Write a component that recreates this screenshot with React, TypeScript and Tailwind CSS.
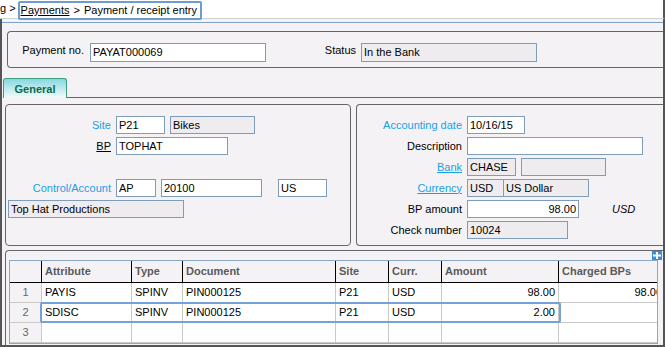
import React from "react";

const Inp = ({ c, gray, right, children }: { c: string; gray?: boolean; right?: boolean; children?: React.ReactNode }) => (
  <div
    className={`h-[18px] shrink-0 border border-[#7f9db9] flex items-center px-[2px] text-black leading-none whitespace-nowrap overflow-hidden ${
      gray ? "bg-[#efecf0]" : "bg-white"
    } ${right ? "justify-end" : "justify-start"} ${c}`}
  >
    {children}
  </div>
);

const Label = ({ children, cls }: { children: React.ReactNode; cls?: string }) => (
  <div className={`w-[105px] shrink-0 text-right pr-0 leading-none whitespace-nowrap ${cls ?? "text-black"}`}>{children}</div>
);

const Row = ({ children }: { children?: React.ReactNode }) => (
  <div className="h-[18px] flex items-center">{children}</div>
);

const headCell = "h-full flex items-center border-r border-black pl-[3px] font-bold text-[#5a5a5a] shrink-0";
const bodyCell = "h-full flex items-center border-r border-[#c9c9c9] px-[3px] shrink-0 bg-white";

const cols = ["w-[32px]", "w-[90px]", "w-[51px]", "w-[153px]", "w-[53px]", "w-[53px]", "w-[117px]", "w-[107px]"];

const rows = [
  ["1", "PAYIS", "SPINV", "PIN000125", "P21", "USD", "98.00", "98.00"],
  ["2", "SDISC", "SPINV", "PIN000125", "P21", "USD", "2.00", ""],
  ["3", "", "", "", "", "", "", ""],
];

export default function App() {
  return (
    <div className="w-[665px] h-[347px] bg-[#f5f2f6] flex flex-col overflow-hidden text-[11px] font-['Liberation_Sans',Arial,sans-serif]">
      {/* breadcrumb bar */}
      <div className="h-[19px] shrink-0 bg-white border-b border-[#d0d0d0] border-r-2 border-r-[#555] flex items-start relative z-10 text-black">
        <span className="underline mt-[3px] leading-none">g</span>
        <span className="ml-[3px] mt-[3px] leading-none">&gt;</span>
        <div className="ml-[2px] mt-[1px] w-[184px] h-[19px] border-2 border-[#6f9bd0] rounded-[2px] flex items-center pl-[1px] leading-none bg-white">
          <span className="underline">Payments</span>
          <span className="ml-[4px]">&gt;</span>
          <span className="ml-[4px]">Payment / receipt entry</span>
        </div>
      </div>

      {/* main */}
      <div className="flex-1 flex flex-col border-l-2 border-r-2 border-b-2 border-[#555] min-h-0">
        <div className="pt-[3px]">
          <div className="h-px bg-[#7ea2c8]" />
        </div>

        {/* header box */}
        <div className="mt-[8px] ml-[5px] h-[37px] border border-r-0 border-[#666] rounded-l-[4px] flex items-start pt-[11px]">
          <div className="w-[76px] text-right leading-none self-center -mt-[11px] pt-[1px]">Payment no.</div>
          <div className="ml-[6px]">
            <Inp c="w-[176px] h-[19px]">PAYAT000069</Inp>
          </div>
          <div className="w-[90px] text-right leading-none self-center -mt-[11px] pt-[1px]">Status</div>
          <div className="ml-[5px]">
            <Inp c="w-[176px] h-[19px]" gray>
              In the Bank
            </Inp>
          </div>
        </div>

        {/* tab row */}
        <div className="mt-[10px] h-[20px] flex items-end">
          <div className="ml-[1px] w-[64px] h-[20px] border border-b-0 border-[#3ba07f] rounded-t-[3px] bg-linear-to-b from-[#86d7e1] to-[#f3fbfb] flex items-center justify-center pt-[1px] font-bold text-[#0f6a4c] leading-none">
            General
          </div>
          <div className="flex-1 h-full border-b border-[#666]" />
        </div>

        {/* panels */}
        <div className="mt-[6px] ml-[3px] h-[142px] flex gap-[5px]">
          {/* left */}
          <div className="w-[346px] h-full border border-[#666] rounded-[4px] pt-[11px] flex flex-col gap-[3px]">
            <Row>
              <Label cls="text-[#1a9fe4]">Site</Label>
              <div className="ml-[5px] flex gap-[5px]">
                <Inp c="w-[49px]">P21</Inp>
                <Inp c="w-[85px]" gray>
                  Bikes
                </Inp>
              </div>
            </Row>
            <Row>
              <Label cls="text-black underline">BP</Label>
              <div className="ml-[5px]">
                <Inp c="w-[112px]">TOPHAT</Inp>
              </div>
            </Row>
            <Row />
            <Row>
              <Label cls="text-[#1a9fe4]">Control/Account</Label>
              <div className="ml-[5px] flex">
                <Inp c="w-[40px]">AP</Inp>
                <div className="ml-[5px]">
                  <Inp c="w-[101px]">20100</Inp>
                </div>
                <div className="ml-[16px]">
                  <Inp c="w-[49px]">US</Inp>
                </div>
              </div>
            </Row>
            <Row>
              <div className="ml-[2px]">
                <Inp c="w-[176px]" gray>
                  Top Hat Productions
                </Inp>
              </div>
            </Row>
          </div>

          {/* right */}
          <div className="flex-1 h-full border border-r-0 border-[#666] rounded-l-[4px] pt-[11px] flex flex-col gap-[3px]">
            <Row>
              <Label cls="text-[#1a9fe4]">Accounting date</Label>
              <div className="ml-[5px]">
                <Inp c="w-[58px]">10/16/15</Inp>
              </div>
            </Row>
            <Row>
              <Label>Description</Label>
              <div className="ml-[5px]">
                <Inp c="w-[176px]" />
              </div>
            </Row>
            <Row>
              <Label cls="text-[#1a9fe4] underline">Bank</Label>
              <div className="ml-[5px] flex gap-[5px]">
                <Inp c="w-[49px]" gray>
                  CHASE
                </Inp>
                <Inp c="w-[85px]" gray />
              </div>
            </Row>
            <Row>
              <Label cls="text-[#1a9fe4] underline">Currency</Label>
              <div className="ml-[5px] flex">
                <Inp c="w-[37px]" gray>
                  USD
                </Inp>
                <Inp c="w-[85px] border-l-0" gray>
                  US Dollar
                </Inp>
              </div>
            </Row>
            <Row>
              <Label>BP amount</Label>
              <div className="ml-[5px] flex items-center">
                <Inp c="w-[112px]" right>
                  98.00
                </Inp>
                <span className="ml-[33px] italic leading-none">USD</span>
              </div>
            </Row>
            <Row>
              <Label>Check number</Label>
              <div className="ml-[5px]">
                <Inp c="w-[101px]" gray>
                  10024
                </Inp>
              </div>
            </Row>
          </div>
        </div>

        {/* bottom panel with grid */}
        <div className="mt-[4px] ml-[3px] flex-1 min-h-0 border-t border-l border-[#666] rounded-tl-[4px] pt-[9px] pl-[3px] relative overflow-hidden">
          <div className="absolute top-0 right-[1px] w-[10px] h-[9px] bg-[#3b8fe0] flex items-center justify-center">
            <svg width="8" height="7" viewBox="0 0 8 7">
              <rect x="3" y="0" width="2" height="7" fill="#fff" />
              <rect x="0" y="2.5" width="8" height="2" fill="#fff" />
            </svg>
          </div>
          <div className="w-[649px] border border-[#8aa8c8] overflow-hidden bg-[#f5f2f6]">
            <div className="h-[22px] flex border-b border-black">
              {["", "Attribute", "Type", "Document", "Site", "Curr.", "Amount", "Charged BPs"].map((h, i) => (
                <div key={i} className={`${headCell} ${cols[i]}`}>
                  {h}
                </div>
              ))}
            </div>
            {rows.map((r, ri) => (
              <div key={ri} className="h-[20px] flex border-b border-[#c9c9c9] relative">
                {r.map((v, ci) => (
                  <div
                    key={ci}
                    className={`${bodyCell} ${cols[ci]} ${
                      ci === 0 ? "!bg-[#f5f2f6] justify-center text-[#666]" : ""
                    } ${ci >= 6 ? "justify-end" : ""}`}
                  >
                    {v}
                  </div>
                ))}
                {ri === 1 && (
                  <div className="absolute left-[30px] -top-[1px] w-[521px] h-[21px] border-2 border-[#74a1d6] rounded-[2px] pointer-events-none" />
                )}
              </div>
            ))}
          </div>
        </div>
      </div>
    </div>
  );
}
